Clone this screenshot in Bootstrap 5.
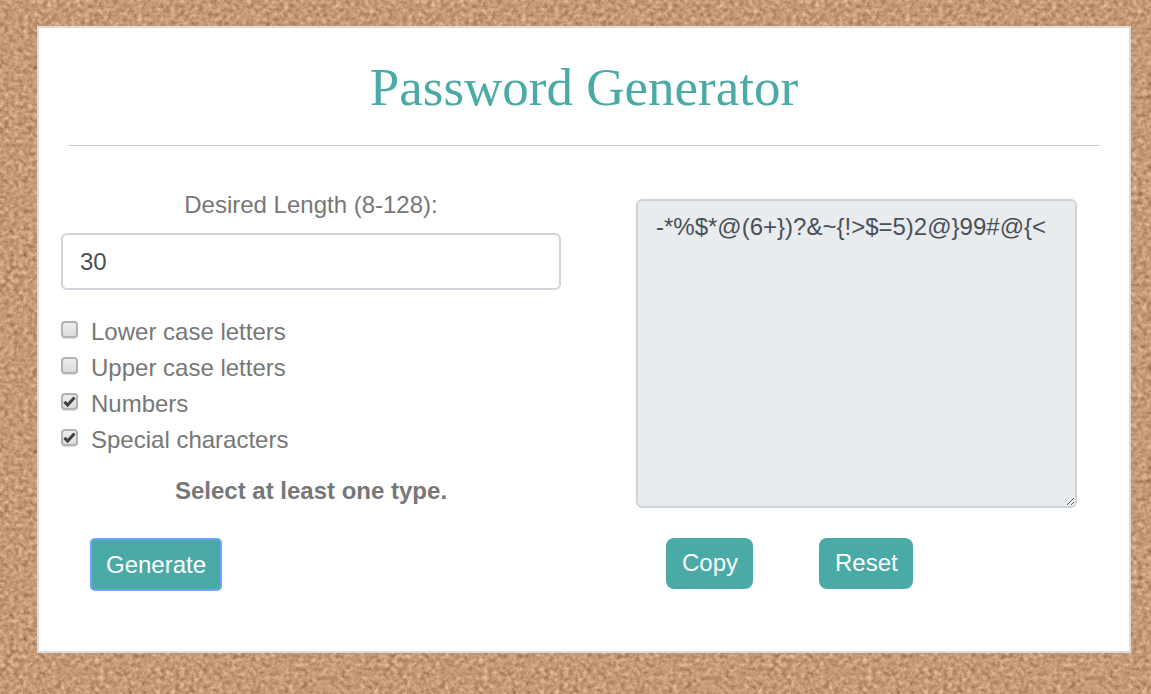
<!DOCTYPE html>
<html lang="en">
<head>
<meta charset="utf-8">
<meta name="viewport" content="width=device-width, initial-scale=1">
<title>Password Generator</title>
<link rel="stylesheet" href="https://cdn.jsdelivr.net/npm/bootstrap@5.3.0/dist/css/bootstrap.min.css">
<style>
  body {
    font-family: Arial, "Liberation Sans", sans-serif;
    font-size: 24px;
    line-height: 36px;
    color: #777;
    padding: 26px 20px 41px 37px;
    background-color: #c99c78;
    /* cork board grain */
    background-image: url("data:image/svg+xml,%3Csvg xmlns='http://www.w3.org/2000/svg' width='384' height='384'%3E%3Cfilter id='c' x='0' y='0' width='100%25' height='100%25' color-interpolation-filters='sRGB'%3E%3CfeTurbulence type='fractalNoise' baseFrequency='.21 .23' numOctaves='4' seed='7' stitchTiles='stitch'/%3E%3CfeColorMatrix values='.32 .22 0 0 .5 .34 .26 0 0 .3 .32 .26 0 0 .17 0 0 0 0 1'/%3E%3C/filter%3E%3Crect width='384' height='384' filter='url(%23c)'/%3E%3C/svg%3E");
  }
  .board { border: 2px solid #ddd; padding-bottom: 61px; }
  .board-title {
    font-family: Georgia, "Liberation Serif", serif;
    font-size: 53px;
    line-height: 60px;
    color: #4aaaa5;
    padding: 29px 0 28px;
  }
  .board-rule { margin: 0 29px; border-color: #ccc; opacity: 1; }
  .settings { padding: 41px 23px 0 22px; }
  .result { padding: 53px 52px 0; }
  .form-control, .form-control:disabled {
    font-size: 24px;
    line-height: 36px;
    color: #495057;
    border: 2px solid #ced4da;
    border-radius: 6px;
    padding: 9px 17px;
  }
  .length-label { margin-bottom: 10px; }
  .length-box.form-control { height: 57px; padding: 9px 17px 8px; }
  .result-box.form-control { height: 309px; background-color: #e9ecef; padding: 8px 16px 8px 18px; }
  .type-list { margin: 24px 0 15px; }
  .type-box {
    appearance: none;
    width: 17px;
    height: 17px;
    margin: 0 13px 6px 0;
    border: 2px solid #b2b2b2;
    border-radius: 4px;
    background: linear-gradient(#ececec, #dcdcdc);
    box-shadow: 0 1px 1px #ddd;
  }
  .type-box:checked {
    background: url("data:image/svg+xml,%3Csvg xmlns='http://www.w3.org/2000/svg' viewBox='0 0 13 13'%3E%3Cpath d='M1.5 6.8 4.6 10 11.5 2.5' fill='none' stroke='%23404040' stroke-width='3'/%3E%3C/svg%3E") center / 13px no-repeat, linear-gradient(#ececec, #dcdcdc);
  }
  .btn-teal, .btn-teal:hover {
    background-color: #4aaaa5;
    color: #fff;
    border: 0;
    border-radius: 8px;
    font-size: 24px;
    line-height: 36px;
    padding: 7px 15px 8px 16px;
  }
  .action-row { margin: 30px 30px 0; gap: 66px; }
  .btn-teal.btn-active-ring { border-radius: 4px; padding: 8px 15px 7px; outline: 2px solid #6ea3fb; outline-offset: -1px; }
</style>
</head>
<body>
<main class="board bg-white">
  <h1 class="board-title text-center fw-normal m-0">Password Generator</h1>
  <hr class="board-rule">
  <div class="row g-0">
    <form class="settings col-6">
      <label class="length-label d-block text-center" for="length">Desired Length (8-128):</label>
      <input class="form-control length-box" type="text" inputmode="numeric" id="length" value="30">
      <div class="type-list">
        <div class="d-flex align-items-center"><input class="type-box" type="checkbox" id="lower"><label for="lower">Lower case letters</label></div>
        <div class="d-flex align-items-center"><input class="type-box" type="checkbox" id="upper"><label for="upper">Upper case letters</label></div>
        <div class="d-flex align-items-center"><input class="type-box" type="checkbox" id="numbers" checked><label for="numbers">Numbers</label></div>
        <div class="d-flex align-items-center"><input class="type-box" type="checkbox" id="special" checked><label for="special">Special characters</label></div>
      </div>
      <p class="fw-bold text-center m-0">Select at least one type.</p>
      <div class="action-row d-flex">
        <button class="btn btn-teal btn-active-ring" type="button">Generate</button>
      </div>
    </form>
    <section class="result col-6">
      <textarea class="form-control result-box" aria-label="Generated password" disabled>-*%$*@(6+})?&amp;~{!&gt;$=5)2@}99#@{&lt;</textarea>
      <div class="action-row d-flex">
        <button class="btn btn-teal" type="button">Copy</button>
        <button class="btn btn-teal" type="button">Reset</button>
      </div>
    </section>
  </div>
</main>
<script src="https://cdn.jsdelivr.net/npm/bootstrap@5.3.0/dist/js/bootstrap.bundle.min.js"></script>
</body>
</html>
